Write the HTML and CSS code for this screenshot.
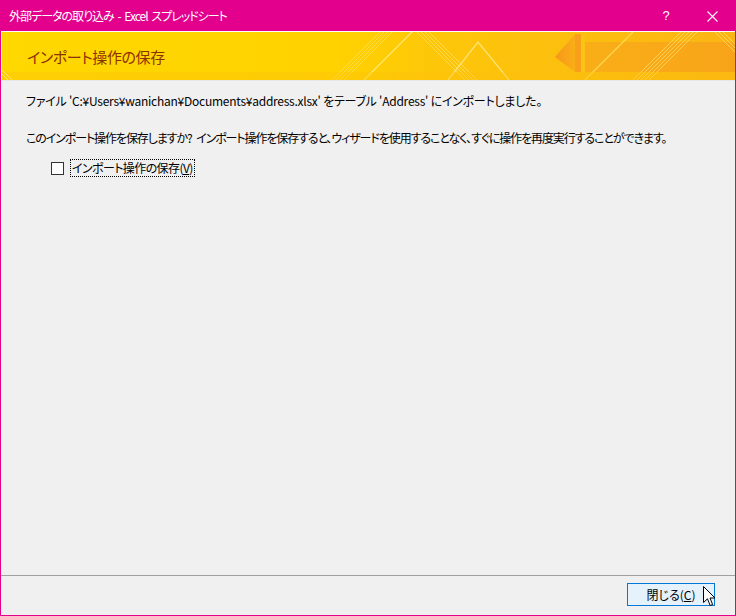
FILE: index.html
```html
<!DOCTYPE html>
<html lang="ja">
<head>
<meta charset="utf-8">
<link rel="stylesheet" href="styles.css">
</head>
<body>
<div class="window">
  <div class="titlebar">
    <span class="title">外部データの取り込み - Excel スプレッドシート</span>
    <div class="tb-buttons">
      <span class="help">?</span>
      <span class="close">
        <svg width="11" height="11" viewBox="0 0 11 11"><path d="M0.5 0.5 L10.5 10.5 M10.5 0.5 L0.5 10.5" stroke="#fff" stroke-width="1.1" fill="none"/></svg>
      </span>
    </div>
  </div>
  <div class="header">
    <svg class="header-art" width="733" height="48" viewBox="0 0 733 48" preserveAspectRatio="none">
      <defs>
        <linearGradient id="bg" x1="0" y1="0" x2="1" y2="0">
          <stop offset="0" stop-color="#FFD800"/>
          <stop offset="0.45" stop-color="#FFD200"/>
          <stop offset="0.6" stop-color="#FDC60A"/>
          <stop offset="1" stop-color="#FBB514"/>
        </linearGradient>
        <linearGradient id="arrow" x1="0" y1="0" x2="1" y2="0">
          <stop offset="0" stop-color="#F7961B"/>
          <stop offset="1" stop-color="#F9AE17"/>
        </linearGradient>
        <linearGradient id="band" x1="0" y1="0" x2="1" y2="0">
          <stop offset="0" stop-color="#F9AE17"/>
          <stop offset="1" stop-color="#F8A41A"/>
        </linearGradient>
      </defs>
      <rect width="733" height="48" fill="url(#bg)"/>
      <g stroke="#FFE36A" stroke-width="1" opacity="0.7">
        <path d="M330 48 L378 0 M334 48 L382 0 M338 48 L386 0 M342 48 L390 0"/>
      </g>
      <path d="M362 48 L410 0" stroke="#FFEB80" stroke-width="1.2" opacity="0.9"/>
      <g stroke="#FFE070" stroke-width="1" fill="none" opacity="0.7">
        <path d="M415 0 L463 48 M419 0 L467 48 M423 0 L471 48 M427 0 L475 48"/>
      </g>
      <path d="M446 48 L476 10 L507 48" stroke="#FFE680" stroke-width="1.3" fill="none" opacity="0.9"/>
      <path d="M553 25 L573 2 L573 40 Z" fill="url(#arrow)"/>
      <rect x="573" y="2" width="6" height="38" fill="#F8A01A"/>
      <rect x="579" y="2" width="4" height="38" fill="#FBC313"/>
      <rect x="583" y="10" width="150" height="30" fill="url(#band)"/>
      <path d="M583 48 L631 0" stroke="#FFDD55" stroke-width="1.3" opacity="0.9"/>
      <g stroke="#FFE070" stroke-width="1" opacity="0.7">
        <path d="M631 48 L679 0 M635 48 L683 0 M639 48 L687 0 M643 48 L691 0 M647 48 L695 0"/>
        <path d="M713 0 L733 20 M717 0 L733 16 M721 0 L733 12"/>
      </g>
      <rect x="0" y="40" width="733" height="8" fill="#FCC10C" opacity="0.35"/>
      <path d="M0 38 L10 48 M0 42 L6 48" stroke="#FFE880" stroke-width="1"/>
    </svg>
    <h1 class="header-title">インポート操作の保存</h1>
  </div>
  <div class="content">
    <p class="line1">ファイル 'C:¥Users¥wanichan¥Documents¥address.xlsx' をテーブル 'Address' にインポートしました。</p>
    <p class="line2">このインポート操作を保存しますか? インポート操作を保存すると、ウィザードを使用することなく、すぐに操作を再度実行することができます。</p>
    <label class="check">
      <span class="box"></span>
      <span class="check-label">インポート操作の保存(<u>V</u>)</span>
    </label>
  </div>
  <div class="footer">
    <button class="btn">閉じる(<u>C</u>)</button>
  </div>
  <svg class="cursor" width="13" height="21" viewBox="0 0 13 21">
    <path d="M0.5 0.5 L0.5 16.5 L4.5 12.8 L7.2 19.5 L9.6 18.5 L7 12 L12 12 Z" fill="#fff" stroke="#000" stroke-width="1"/>
  </svg>
</div>
</body>
</html>
```

FILE: styles.css
```css
html, body {
  margin: 0;
  padding: 0;
}
body {
  width: 736px;
  height: 616px;
  overflow: hidden;
  font-family: "Noto Sans CJK JP", "Noto Sans", sans-serif;
  font-feature-settings: "palt";
}
.window {
  position: relative;
  width: 736px;
  height: 616px;
  box-sizing: border-box;
  border: 1px solid #E3008C;
  background: #F0F0F0;
  display: flex;
  flex-direction: column;
}
.titlebar {
  height: 30px;
  background: #E3008C;
  color: #fff;
  display: flex;
  align-items: center;
  justify-content: space-between;
  flex: none;
}
.title {
  padding-left: 8px;
  font-size: 12px;
  line-height: 30px;
  letter-spacing: -1px;
  word-spacing: 2px;
  white-space: nowrap;
}
.tb-buttons {
  display: flex;
  align-items: center;
  height: 30px;
}
.help {
  width: 46px;
  text-align: center;
  font-size: 13px;
  font-family: "Liberation Sans", sans-serif;
  line-height: 30px;
}
.close {
  width: 46px;
  height: 30px;
  display: flex;
  align-items: center;
  justify-content: center;
}
.header {
  position: relative;
  height: 48px;
  flex: none;
  border-top: 1px solid #fff;
  border-left: 1px solid #FCEB9A;
  display: flex;
  align-items: center;
  overflow: hidden;
}
.header-art {
  position: absolute;
  left: 0;
  top: 0;
}
.header-title {
  position: relative;
  margin: 0 0 0 25px;
  font-size: 15px;
  font-weight: normal;
  color: #8C3200;
  letter-spacing: -0.4px;
}
.content {
  flex: 1;
  border-top: 1px solid #E6E6E6;
  padding: 11px 25px 0 25px;
  font-size: 12px;
  color: #000;
}
.content p {
  margin: 0;
  line-height: 18px;
  white-space: nowrap;
}
.line1 {
  margin-bottom: 19px !important;
  letter-spacing: -0.25px;
}
.line2 {
  letter-spacing: -1.1px;
  word-spacing: 3px;
}
.check {
  display: flex;
  align-items: center;
  margin-top: 12px;
  padding-left: 25px;
}
.box {
  width: 11px;
  height: 11px;
  border: 1px solid #333;
  background: #fff;
  flex: none;
}
.check-label {
  margin-left: 6px;
  padding: 0 1px;
  border: 1px dotted #000;
  line-height: 16px;
  letter-spacing: -0.6px;
}
.footer {
  height: 39px;
  flex: none;
  border-top: 1px solid #A0A0A0;
  display: flex;
  justify-content: flex-end;
  align-items: flex-start;
  padding-right: 20px;
}
.btn {
  margin-top: 7px;
  width: 88px;
  height: 23px;
  border: 1px solid #0078D7;
  background: #E5F1FB;
  font-family: "Noto Sans CJK JP", sans-serif;
  font-feature-settings: "palt";
  font-size: 12px;
  color: #000;
  padding: 0;
}
.cursor {
  position: absolute;
  left: 702px;
  top: 585px;
}
```
